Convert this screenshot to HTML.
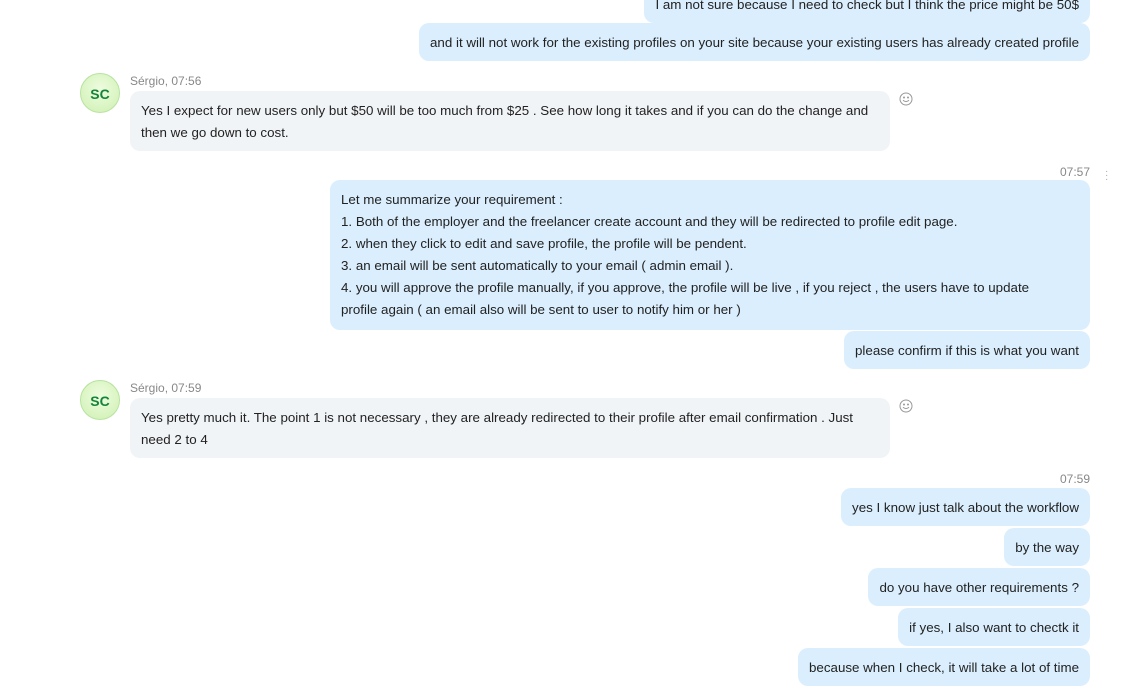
<!DOCTYPE html>
<html><head><meta charset="utf-8"><style>
body{margin:0;width:1132px;height:667px;overflow:hidden;background:#fff;font-family:"Liberation Sans",sans-serif;position:relative;color:#222}
.b{position:absolute;font-size:13.35px;line-height:22px;padding:9px 11px 7px;box-sizing:border-box;border-radius:10px;white-space:nowrap}
.o{background:#daeefd;right:42px}
.i{background:#f1f4f7;left:130px;width:760px}
.av{position:absolute;left:80px;width:40px;height:40px;border-radius:50%;background:radial-gradient(circle at 50% 40%,#eefce0,#cdf0b0);border:1px solid #b8e3a0;box-sizing:border-box;color:#13853a;font-weight:bold;font-size:14px;text-align:center;line-height:40px}
.n{position:absolute;left:130px;font-size:12px;color:#888}
.t{position:absolute;right:42px;font-size:12px;color:#888}
.e{position:absolute;left:898px}
</style></head><body>
<div class="b o" style="top:-15px;">I am not sure because I need to check but I think the price might be 50$</div>
<div class="b o" style="top:23px">and it will not work for the existing profiles on your site because your existing users has already created profile</div>
<div class="av" style="top:73px">SC</div>
<div class="n" style="top:74px">Sérgio, 07:56</div>
<div class="b i" style="top:91px">Yes I expect for new users only but $50 will be too much from $25 . See how long it takes and if you can do the change and<br>then we go down to cost.</div>
<svg class="e" style="top:91px" width="16" height="16" viewBox="0 0 16 16" fill="none" stroke="#999" stroke-width="1"><circle cx="8" cy="8" r="6"/><path d="M5 9.3q3 2.6 6 0"/><circle cx="6" cy="6.5" r=".5" fill="#999"/><circle cx="10" cy="6.5" r=".5" fill="#999"/></svg>
<div class="t" style="top:165px">07:57</div>
<div style="position:absolute;left:1105px;top:170px;color:#aaa;font-size:10px;line-height:4px">·<br>·<br>·</div>
<div class="b o" style="top:180px;left:330px;width:760px;padding-bottom:9px">Let me summarize your requirement :<br>1. Both of the employer and the freelancer create account and they will be redirected to profile edit page.<br>2. when they click to edit and save profile, the profile will be pendent.<br>3. an email will be sent automatically to your email ( admin email ).<br>4. you will approve the profile manually, if you approve, the profile will be live , if you reject , the users have to update<br>profile again ( an email also will be sent to user to notify him or her )</div>
<div class="b o" style="top:331px">please confirm if this is what you want</div>
<div class="av" style="top:380px">SC</div>
<div class="n" style="top:381px">Sérgio, 07:59</div>
<div class="b i" style="top:398px">Yes pretty much it. The point 1 is not necessary , they are already redirected to their profile after email confirmation . Just<br>need 2 to 4</div>
<svg class="e" style="top:398px" width="16" height="16" viewBox="0 0 16 16" fill="none" stroke="#999" stroke-width="1"><circle cx="8" cy="8" r="6"/><path d="M5 9.3q3 2.6 6 0"/><circle cx="6" cy="6.5" r=".5" fill="#999"/><circle cx="10" cy="6.5" r=".5" fill="#999"/></svg>
<div class="t" style="top:472px">07:59</div>
<div class="b o" style="top:488px">yes I know just talk about the workflow</div>
<div class="b o" style="top:528px">by the way</div>
<div class="b o" style="top:568px">do you have other requirements ?</div>
<div class="b o" style="top:608px">if yes, I also want to chectk it</div>
<div class="b o" style="top:648px">because when I check, it will take a lot of time</div>
</body></html>
